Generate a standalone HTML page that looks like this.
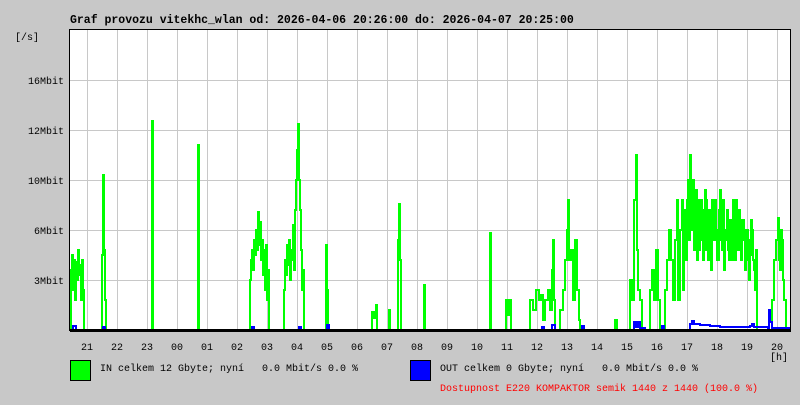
<!DOCTYPE html>
<html><head><meta charset="utf-8"><style>
body{margin:0;background:#c8c8c8;width:800px;height:400px;overflow:hidden}
svg text{font-family:"Liberation Mono",monospace;font-size:10px;fill:#000;white-space:pre}
</style></head><body>
<svg width="800" height="400" xmlns="http://www.w3.org/2000/svg">
<rect width="800" height="400" fill="#c8c8c8"/>
<text x="70" y="23" style="font-size:11.5px;font-weight:bold">Graf provozu vitekhc_wlan od: 2026-04-06 20:26:00 do: 2026-04-07 20:25:00</text>
<rect x="70" y="30" width="720" height="300" fill="#fff"/>
<g stroke="#c8c8c8" stroke-width="1">
<line x1="70" y1="80.5" x2="790" y2="80.5"/><line x1="70" y1="130.5" x2="790" y2="130.5"/><line x1="70" y1="180.5" x2="790" y2="180.5"/><line x1="70" y1="230.5" x2="790" y2="230.5"/><line x1="70" y1="280.5" x2="790" y2="280.5"/>
<line x1="87.5" y1="30" x2="87.5" y2="330"/><line x1="117.5" y1="30" x2="117.5" y2="330"/><line x1="147.5" y1="30" x2="147.5" y2="330"/><line x1="177.5" y1="30" x2="177.5" y2="330"/><line x1="207.5" y1="30" x2="207.5" y2="330"/><line x1="237.5" y1="30" x2="237.5" y2="330"/><line x1="267.5" y1="30" x2="267.5" y2="330"/><line x1="297.5" y1="30" x2="297.5" y2="330"/><line x1="327.5" y1="30" x2="327.5" y2="330"/><line x1="357.5" y1="30" x2="357.5" y2="330"/><line x1="387.5" y1="30" x2="387.5" y2="330"/><line x1="417.5" y1="30" x2="417.5" y2="330"/><line x1="447.5" y1="30" x2="447.5" y2="330"/><line x1="477.5" y1="30" x2="477.5" y2="330"/><line x1="507.5" y1="30" x2="507.5" y2="330"/><line x1="537.5" y1="30" x2="537.5" y2="330"/><line x1="567.5" y1="30" x2="567.5" y2="330"/><line x1="597.5" y1="30" x2="597.5" y2="330"/><line x1="627.5" y1="30" x2="627.5" y2="330"/><line x1="657.5" y1="30" x2="657.5" y2="330"/><line x1="687.5" y1="30" x2="687.5" y2="330"/><line x1="717.5" y1="30" x2="717.5" y2="330"/><line x1="747.5" y1="30" x2="747.5" y2="330"/><line x1="777.5" y1="30" x2="777.5" y2="330"/>
</g>
<path id="g" fill="none" stroke="#00ff00" stroke-width="1.6" shape-rendering="crispEdges" d=""/>
<path id="b" fill="none" stroke="#0000ff" stroke-width="1.6" shape-rendering="crispEdges" d=""/>
<rect x="69.5" y="29.5" width="721" height="301" fill="none" stroke="#000" stroke-width="1"/>
<line x1="70" y1="330.5" x2="791" y2="330.5" stroke="#000" stroke-width="3"/>
<text x="15" y="40">[/s]</text>
<g text-anchor="end"><text x="64" y="84">16Mbit</text><text x="64" y="134">12Mbit</text><text x="64" y="184">10Mbit</text><text x="64" y="234">6Mbit</text><text x="64" y="284">3Mbit</text></g>
<g text-anchor="middle"><text x="87" y="350">21</text><text x="117" y="350">22</text><text x="147" y="350">23</text><text x="177" y="350">00</text><text x="207" y="350">01</text><text x="237" y="350">02</text><text x="267" y="350">03</text><text x="297" y="350">04</text><text x="327" y="350">05</text><text x="357" y="350">06</text><text x="387" y="350">07</text><text x="417" y="350">08</text><text x="447" y="350">09</text><text x="477" y="350">10</text><text x="507" y="350">11</text><text x="537" y="350">12</text><text x="567" y="350">13</text><text x="597" y="350">14</text><text x="627" y="350">15</text><text x="657" y="350">16</text><text x="687" y="350">17</text><text x="717" y="350">18</text><text x="747" y="350">19</text><text x="777" y="350">20</text></g>
<text x="770" y="360">[h]</text>
<rect x="70.5" y="360.5" width="20" height="20" fill="#00ff00" stroke="#000"/>
<text x="100" y="371">IN celkem 12 Gbyte; nyní   0.0 Mbit/s 0.0 %</text>
<rect x="410.5" y="360.5" width="20" height="20" fill="#0000ff" stroke="#000"/>
<text x="440" y="371">OUT celkem 0 Gbyte; nyní   0.0 Mbit/s 0.0 %</text>
<text x="440" y="391" style="fill:#ff0000">Dostupnost E220 KOMPAKTOR semik 1440 z 1440 (100.0 %)</text>
</svg>
<script>
function step(s){var p=s.trim().split(/\s+/).map(function(t){var a=t.split(',').map(Number);if(a[1]>=329)a[1]=331;return a;});var d='M'+p[0][0]+' '+p[0][1];for(var i=1;i<p.length;i++){d+=' H'+p[i][0]+' V'+p[i][1];}return d;}
var G="70,329 71,270 72,255 73,290 74,260 75,300 76,262 77,280 78,250 79,275 80,265 81,300 82,260 83,290 84,329 101,329 102,255 103,175 104,250 105,300 106,329 151,329 152,121 153,329 197,329 198,145 199,329 249,329 250,280 251,260 252,250 253,270 254,240 255,255 256,230 257,250 258,212 259,245 260,222 261,260 262,240 263,275 264,250 265,290 266,245 267,300 268,270 269,329 283,329 284,290 285,260 286,275 287,245 288,265 289,240 290,280 291,250 292,260 293,225 294,270 295,210 296,180 297,150 298,124 299,180 300,210 301,250 302,290 303,270 304,329 325,329 326,245 327,290 328,329 371,329 372,312 374,318 376,305 377,329 388,329 389,310 390,329 397,329 398,240 399,204 400,260 401,329 423,329 424,285 425,329 489,329 490,233 491,329 505,329 506,300 508,315 510,300 511,329 528,329 530,300 533,310 536,290 539,300 541,295 543,320 545,300 548,290 550,310 552,270 553,240 554,300 555,329 560,310 563,290 565,260 567,230 568,200 569,260 571,250 573,300 575,240 577,290 579,320 580,329 612,329 615,320 617,329 628,329 630,280 632,300 634,200 636,155 637,250 638,290 640,300 642,329 648,329 650,290 652,270 654,300 656,250 658,300 660,329 663,329 665,290 667,260 669,230 671,260 673,300 675,240 677,200 678,300 680,230 682,200 683,290 684,250 685,210 686,260 687,200 688,180 689,240 690,155 691,200 692,230 693,180 694,250 695,230 696,190 697,260 698,200 699,250 700,240 701,200 702,210 703,260 704,250 705,190 706,200 707,250 708,260 709,210 710,230 711,270 712,200 713,240 714,240 715,200 716,230 717,260 718,260 719,210 720,190 721,240 722,250 723,200 724,270 725,230 726,240 727,210 728,250 729,260 730,220 731,240 732,260 733,200 734,240 735,260 736,200 737,230 738,250 739,210 740,220 741,260 742,240 743,220 744,230 745,270 746,260 747,230 748,240 749,280 750,255 751,220 752,230 753,260 754,270 755,290 756,250 757,329 770,329 772,300 774,260 776,240 778,218 779,260 780,270 781,230 782,240 783,280 784,300 786,329 789,329";
var B="71,329 73,326 76,329 101,329 103,327 105,329 250,329 252,327 254,329 297,329 299,327 301,329 326,329 327,325 329,329 540,329 542,327 544,329 550,329 552,325 555,329 580,329 582,326 584,329 632,329 634,322 636,327 638,322 640,328 645,329 660,329 662,326 664,329 688,329 690,324 692,321 694,324 700,325 710,326 720,327 740,327 750,326 752,324 754,327 768,328 769,310 770,322 772,328 789,329";
document.getElementById('g').setAttribute('d',step(G));
document.getElementById('b').setAttribute('d',step(B));
</script>
</body></html>
